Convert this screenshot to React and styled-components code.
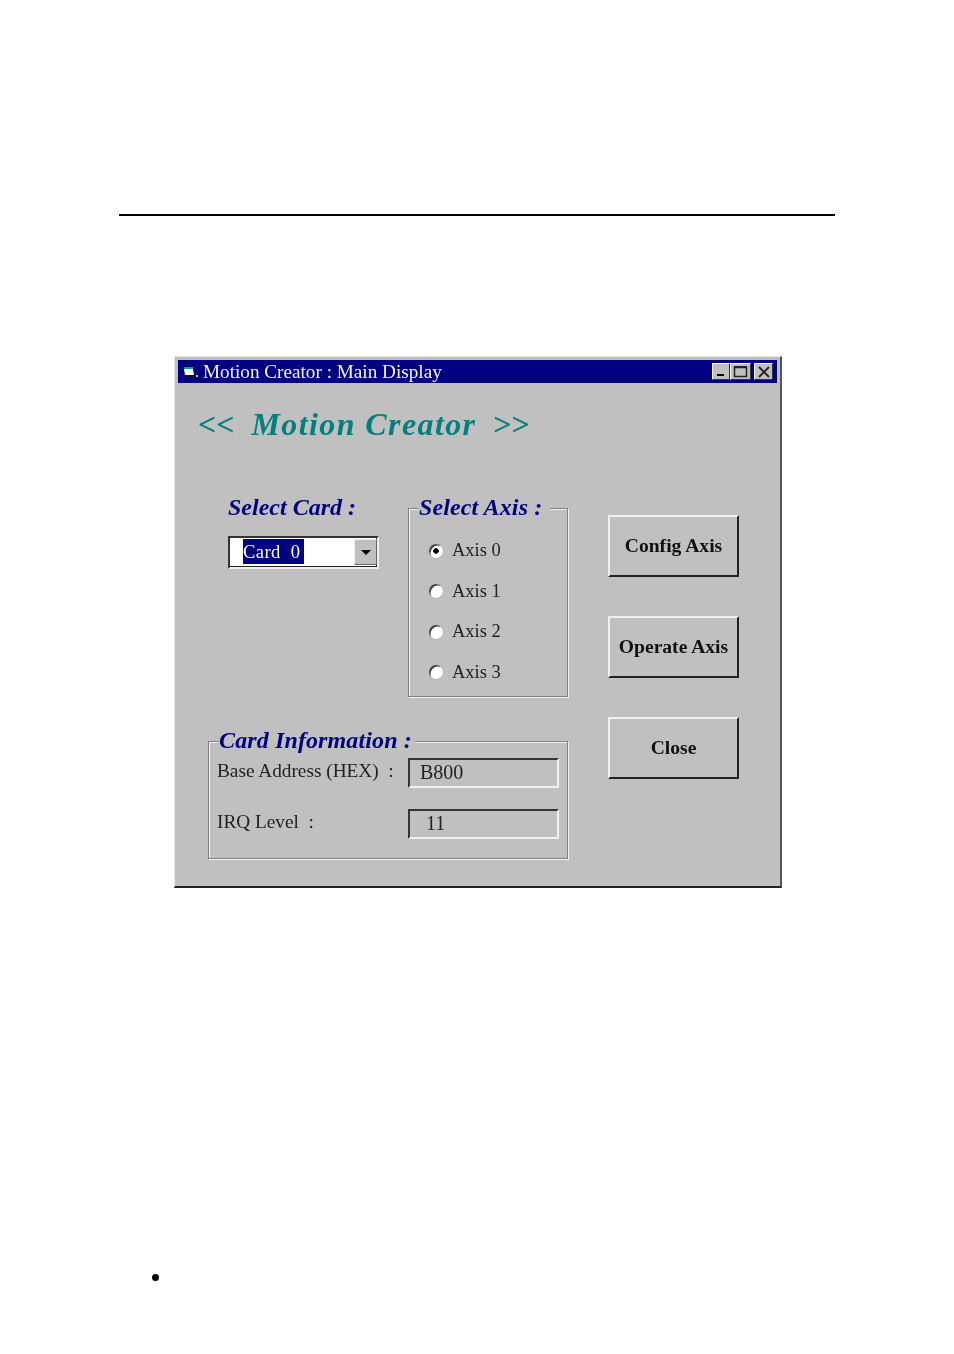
import styled, { createGlobalStyle } from "styled-components";

const GlobalStyle = createGlobalStyle`
  html, body {
    margin: 0;
    background: #fff;
    font-family: "Liberation Serif", serif;
  }
`;

const Page = styled.div`
  width: 954px;
  height: 1354px;
  padding: 214px 119px 0;
  box-sizing: border-box;
  overflow: hidden;
`;

const Rule = styled.div`
  width: 716px;
  height: 2px;
  background: #000;
`;

const Window = styled.div`
  width: 608px;
  height: 532px;
  margin: 140px 0 0 55px;
  padding: 3px;
  box-sizing: border-box;
  background: #c0c0c0;
  border-top: 1px solid #e8e8e8;
  border-left: 1px solid #e8e8e8;
  border-right: 2px solid #555;
  border-bottom: 2px solid #222;
  filter: blur(0.35px);
`;

const TitleBar = styled.div`
  height: 23px;
  background: #000080;
  display: flex;
  align-items: center;
  padding: 0 4px 0 5px;
  color: #f4f4f4;
`;

const TitleText = styled.span`
  font-size: 19.2px;
  margin-left: 5px;
  flex: 1;
  white-space: nowrap;
`;

const CtrlButton = styled.button`
  width: ${(p) => p.$w}px;
  height: 17px;
  margin-left: ${(p) => p.$gap || 0}px;
  padding: 0;
  background: #c0c0c0;
  border: 1px solid;
  border-color: #f4f4f4 #333 #333 #f4f4f4;
  display: flex;
  align-items: center;
  justify-content: center;
`;

const Body = styled.div`
  display: flex;
`;

const LeftColumn = styled.div`
  width: 390px;
  margin-left: 30px;
`;

const AppTitle = styled.div`
  margin-top: 21px;
  margin-left: -10px;
  font-size: 32px;
  line-height: 40px;
  font-weight: bold;
  font-style: italic;
  color: #008080;
  white-space: pre;
  width: 380px;
`;

const AppName = styled.span`
  margin-left: 1px;
  letter-spacing: 1.4px;
`;

const TopRow = styled.div`
  display: flex;
  margin-top: 49px;
  margin-left: 20px;
`;

const CardColumn = styled.div`
  width: 180px;
`;

const Heading = styled.div`
  font-size: 24px;
  line-height: 28px;
  font-weight: bold;
  font-style: italic;
  color: #000080;
  white-space: nowrap;
`;

const Combo = styled.div`
  width: 151px;
  height: 33px;
  margin-top: 15px;
  box-sizing: border-box;
  display: flex;
  background: #fff;
  border: 2px solid;
  border-color: #333 #f0f0f0 #f0f0f0 #333;
  padding: 1px 0 1px 1px;
  box-shadow: inset -1px -1px 0 #222;
`;

const ComboValue = styled.div`
  flex: 1;
  padding: 0 0 0 12px;
`;

const Selected = styled.span`
  display: inline-block;
  width: 61px;
  height: 25px;
  line-height: 25px;
  font-size: 18.6px;
  letter-spacing: 0.4px;
  background: #000080;
  color: #fff;
  white-space: pre;
`;

const ComboButton = styled.div`
  width: 21px;
  margin-bottom: 1px;
  background: #c0c0c0;
  border: 1px solid;
  border-color: #eee #666 #666 #eee;
  display: flex;
  align-items: center;
  justify-content: center;
`;

const Arrow = styled.div`
  border-left: 5px solid transparent;
  border-right: 5px solid transparent;
  border-top: 5px solid #000;
`;

const Group = styled.fieldset`
  margin: 0;
  padding: 0;
  box-sizing: border-box;
  min-width: 0;
  width: ${(p) => p.$w}px;
  height: ${(p) => p.$h}px;
  border: 1px solid #808080;
  box-shadow: 1px 1px 0 #f4f4f4, inset 1px 1px 0 #f4f4f4;
`;

const GroupLegend = styled.legend`
  margin-left: ${(p) => p.$left}px;
  padding: 0 ${(p) => p.$pad || 0}px 3px 1px;
  background: #c0c0c0;
  font-size: 24px;
  line-height: 28px;
  letter-spacing: 0.12px;
  font-weight: bold;
  font-style: italic;
  color: #000080;
  white-space: nowrap;
`;

const AxisList = styled.div`
  display: flex;
  flex-direction: column;
  gap: 15.5px;
  padding: 14px 0 0 20px;
`;

const AxisRow = styled.label`
  display: flex;
  align-items: center;
  height: 25px;
  gap: 9px;
  font-size: 18.5px;
  color: #222;
  white-space: pre;
`;

const Radio = styled.span`
  width: 14px;
  height: 14px;
  border-radius: 50%;
  background: ${(p) =>
    p.$checked
      ? "radial-gradient(circle, #000 0 2.5px, #fff 3px)"
      : "#fff"};
  box-shadow: inset 2px 2px 0 -0.5px #444, 0 0 0 0.5px #aaa;
`;

const InfoGroup = styled(Group)`
  margin-top: 29px;
`;

const InfoRow = styled.div`
  display: flex;
  height: 30px;
  margin-bottom: 21px;
`;

const InfoRows = styled.div`
  padding: 2px 0 0 8px;
  margin-top: -1px;
`;

const InfoLabel = styled.div`
  width: 191px;
  font-size: 19.3px;
  line-height: 25px;
  color: #222;
  white-space: pre;
`;

const InfoField = styled.div`
  width: 151px;
  height: 30px;
  box-sizing: border-box;
  border: 2px solid;
  border-color: #333 #f0f0f0 #f0f0f0 #333;
  padding-left: ${(p) => p.$pad}px;
  font-size: 20px;
  line-height: 24px;
  color: #222;
`;

const ButtonColumn = styled.div`
  display: flex;
  flex-direction: column;
  gap: 39px;
  margin-left: 10px;
  padding-top: 132px;
`;

const ActionButton = styled.button`
  width: 131px;
  height: 62px;
  padding: 0;
  box-sizing: border-box;
  background: #c0c0c0;
  border: 2px solid;
  border-color: #f0f0f0 #222 #222 #f0f0f0;
  font-family: "Liberation Serif", serif;
  font-size: 19.6px;
  font-weight: bold;
  color: #111;
  white-space: nowrap;
`;

const Bullet = styled.div`
  width: 7px;
  height: 7px;
  margin: 386px 0 0 33px;
  border-radius: 50%;
  background: #000;
`;

const axes = ["Axis 0", "Axis 1", "Axis 2", "Axis 3"];
const actions = ["Config Axis", "Operate Axis", "Close"];

export default function App() {
  return (
    <>
      <GlobalStyle />
      <Page>
        <Rule />
        <Window>
          <TitleBar>
            <svg width="15" height="12" viewBox="0 0 15 12">
              <path d="M1 1h9v2H1z" fill="#00a0a0" />
              <path d="M1 3h9l1 6H2z" fill="#fff" />
              <path d="M2 9h10v2H4z" fill="#111" />
              <path d="M13 9h2v2h-2z" fill="#bbb" />
            </svg>
            <TitleText>Motion Creator : Main Display</TitleText>
            <CtrlButton $w={18}>
              <svg width="12" height="11" viewBox="0 0 12 11">
                <path d="M2 8h7v2H2z" fill="#000" />
              </svg>
            </CtrlButton>
            <CtrlButton $w={21}>
              <svg width="15" height="13" viewBox="0 0 15 13">
                <path d="M1.5 2.5h12v9h-12z" fill="none" stroke="#222" strokeWidth="1.5" />
                <path d="M1 1h13v2H1z" fill="#222" />
              </svg>
            </CtrlButton>
            <CtrlButton $w={19} $gap={3}>
              <svg width="14" height="12" viewBox="0 0 14 12">
                <path d="M2 1l10 10M12 1L2 11" stroke="#222" strokeWidth="1.8" />
              </svg>
            </CtrlButton>
          </TitleBar>
          <Body>
            <LeftColumn>
              <AppTitle>
                {"<<  "}
                <AppName>Motion Creator</AppName>
                {"  >>"}
              </AppTitle>
              <TopRow>
                <CardColumn>
                  <Heading>Select Card :</Heading>
                  <Combo>
                    <ComboValue>
                      <Selected>{"Card  0"}</Selected>
                    </ComboValue>
                    <ComboButton>
                      <Arrow />
                    </ComboButton>
                  </Combo>
                </CardColumn>
                <Group $w={160} $h={204}>
                  <GroupLegend $left={9} $pad={8}>
                    Select Axis :
                  </GroupLegend>
                  <AxisList>
                    {axes.map((axis, i) => (
                      <AxisRow key={axis}>
                        <Radio $checked={i === 0} />
                        {axis}
                      </AxisRow>
                    ))}
                  </AxisList>
                </Group>
              </TopRow>
              <InfoGroup $w={360} $h={133}>
                <GroupLegend $left={9} $pad={3}>
                  Card Information :
                </GroupLegend>
                <InfoRows>
                  <InfoRow>
                    <InfoLabel>{"Base Address (HEX)  :"}</InfoLabel>
                    <InfoField $pad={10}>B800</InfoField>
                  </InfoRow>
                  <InfoRow>
                    <InfoLabel>{"IRQ Level  :"}</InfoLabel>
                    <InfoField $pad={16}>11</InfoField>
                  </InfoRow>
                </InfoRows>
              </InfoGroup>
            </LeftColumn>
            <ButtonColumn>
              {actions.map((label) => (
                <ActionButton key={label}>{label}</ActionButton>
              ))}
            </ButtonColumn>
          </Body>
        </Window>
        <Bullet />
      </Page>
    </>
  );
}
